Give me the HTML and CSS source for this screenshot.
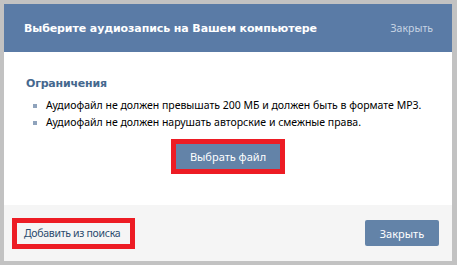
FILE: index.html
```html
<!DOCTYPE html>
<html>
<head>
<meta charset="utf-8">
<link rel="stylesheet" href="styles.css">
</head>
<body>
<div class="dialog">
  <div class="header">
    <div class="title">Выберите аудиозапись на Вашем компьютере</div>
    <a class="hclose">Закрыть</a>
  </div>
  <div class="content">
    <div class="heading">Ограничения</div>
    <ul class="rules">
      <li>Аудиофайл не должен превышать 200 МБ и должен быть в формате MP3.</li>
      <li>Аудиофайл не должен нарушать авторские и смежные права.</li>
    </ul>
    <div class="center">
      <div class="mark"><button class="btn choose">Выбрать файл</button></div>
    </div>
  </div>
  <div class="footer">
    <div class="mark"><a class="search">Добавить из поиска</a></div>
    <button class="btn close">Закрыть</button>
  </div>
</div>
</body>
</html>
```

FILE: styles.css
```css
html, body { margin: 0; padding: 0; }
body {
  background: #c2c2c2;
  width: 457px;
  height: 265px;
  box-sizing: border-box;
  padding: 4px 5px 4px 4px;
  font-family: "Noto Sans", "DejaVu Sans", sans-serif;
  font-size: 10.5px;
  white-space: nowrap;
}
.dialog {
  width: 448px;
  height: 257px;
  display: flex;
  flex-direction: column;
  background: #fff;
}
.header {
  height: 48px;
  background: #5a7ba6;
  display: flex;
  align-items: center;
  justify-content: space-between;
  padding: 0 19px 0 20px;
}
.title {
  color: #fff;
  font-family: "DejaVu Sans", sans-serif;
  font-weight: bold;
  font-size: 11px;
  letter-spacing: -0.1px;
}
.hclose { color: #c6d3e3; font-size: 10.5px; }
.content {
  flex: 1;
  padding: 25px 22px 0 22px;
}
.heading {
  color: #45688e;
  font-family: "DejaVu Sans", sans-serif;
  font-size: 11px;
  font-weight: bold;
  line-height: 14px;
  letter-spacing: -0.2px;
}
.rules {
  list-style: none;
  margin: 6px 0 0 0;
  padding: 0;
}
.rules li {
  position: relative;
  padding-left: 20px;
  line-height: 17px;
  color: #000;
}
.rules li::before {
  content: "";
  position: absolute;
  left: 7px;
  top: 7px;
  width: 4px;
  height: 4px;
  background: #8fa3bc;
}
.center {
  display: flex;
  justify-content: center;
  margin-top: 8px;
}
.mark {
  border: 5px solid #ed1c24;
  display: flex;
}
.btn {
  font-family: inherit;
  font-size: 11px;
  color: #fff;
  background: #6383a8;
  border: none;
  border-radius: 2px;
  padding: 0;
}
.choose {
  width: 104px;
  height: 25px;
  border-radius: 0;
}
.footer {
  height: 56px;
  background: #f5f5f5;
  display: flex;
  align-items: center;
  justify-content: space-between;
  padding: 0 13px 0 8px;
}
.search {
  color: #2b4a6d;
  display: block;
  padding: 0 6px 0 7px;
  line-height: 21px;
  width: 100px;
  letter-spacing: -0.3px;
}
.close {
  width: 74px;
  height: 26px;
}
```
